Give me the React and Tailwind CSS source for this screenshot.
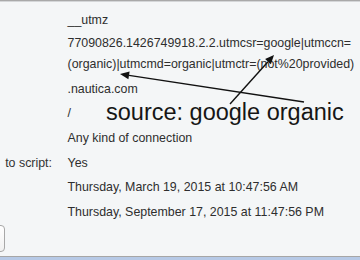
import React from "react";

const font = { fontFamily: '"Liberation Sans", Arial, Helvetica, sans-serif' };

function Row({ label, children, tight }) {
  return (
    <>
      <div className="flex justify-end whitespace-nowrap text-[#333333]">{label}</div>
      <div className={(tight ? "leading-[21px] " : "") + "whitespace-nowrap text-[#2e2e2e]"}>{children}</div>
    </>
  );
}

function Arrows() {
  return (
    <svg
      className="absolute left-0 top-0 pointer-events-none"
      width="360"
      height="260"
      viewBox="0 0 360 260"
    >
      <line x1="304" y1="102" x2="129" y2="75.4" stroke="#111" strokeWidth="1.4" />
      <polygon points="120,74 129.6,71.6 128.4,79.2" fill="#111" />
      <line x1="230" y1="104" x2="268" y2="61.7" stroke="#111" strokeWidth="1.4" />
      <polygon points="274,55 270.9,64.3 265.1,59.1" fill="#111" />
    </svg>
  );
}

export default function App() {
  return (
    <div
      className="relative w-[360px] h-[260px] overflow-hidden bg-[#f4f6f7] flex flex-col"
      style={font}
    >
      <div className="h-px bg-[#a9a9a9] shrink-0" />
      <div className="h-px bg-[#d4d6d8] shrink-0" />
      <div className="grid grid-cols-[52px_1fr] gap-x-[15.5px] gap-y-[2.6px] pt-[6.7px] text-[12.4px] leading-[22px]">
        <Row label="">__utmz</Row>
        <Row label="" tight>
          <div>77090826.1426749918.2.2.utmcsr=google|utmccn=</div>
          <div>(organic)|utmcmd=organic|utmctr=(not%20provided)</div>
        </Row>
        <Row label="">.nautica.com</Row>
        <Row label="">/</Row>
        <Row label="">Any kind of connection</Row>
        <Row label="to script:">Yes</Row>
        <Row label="">Thursday, March 19, 2015 at 10:47:56 AM</Row>
        <Row label="">Thursday, September 17, 2015 at 11:47:56 PM</Row>
      </div>
      <div className="mt-auto pb-[4px] shrink-0">
        <button className="ml-[-55px] block w-[60px] h-[27px] rounded-[4px] border border-[#a8a8a8] bg-gradient-to-b from-[#ffffff] to-[#f1f1f1]" />
      </div>
      <div className="h-px bg-[#a6a6a6] shrink-0" />
      <div className="h-[3px] bg-[#b6c9e6] shrink-0" />

      <div className="absolute left-[106px] top-[101px] text-[23.5px] leading-none whitespace-nowrap text-[#161616]">
        source: google organic
      </div>
      <Arrows />
    </div>
  );
}
